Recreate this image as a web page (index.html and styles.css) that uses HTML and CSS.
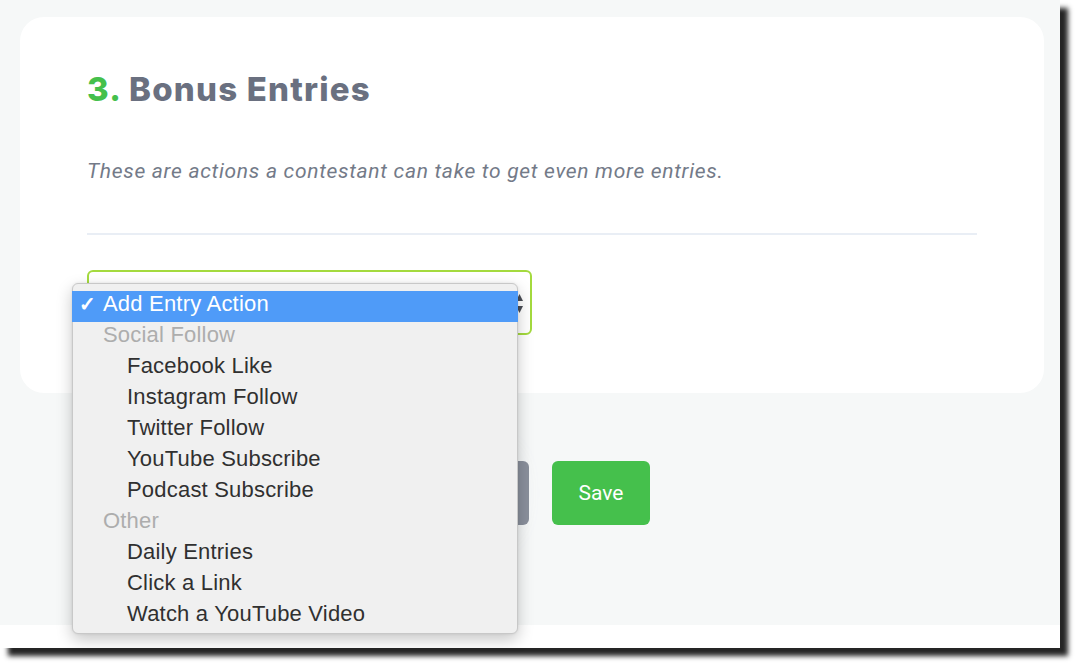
FILE: index.html
```html
<!DOCTYPE html>
<html lang="en">
<head>
<meta charset="utf-8">
<title>Bonus Entries</title>
<link rel="stylesheet" href="styles.css">
</head>
<body>
<div class="frame">
  <div class="page">
    <section class="card">
      <h2 class="title"><span class="num">3.</span> Bonus Entries</h2>
      <p class="lead">These are actions a contestant can take to get even more entries.</p>
      <hr class="rule">
      <div class="select">
        <svg class="arrows" width="7" height="19" viewBox="0 0 7 19" aria-hidden="true">
          <path d="M3.5 0 L7 7 L0 7 Z" fill="#4a4d55"/>
          <path d="M0 12 L7 12 L3.5 19 Z" fill="#4a4d55"/>
        </svg>
      </div>
    </section>
    <div class="actions">
      <button class="btn btn-back">Back</button>
      <button class="btn btn-save">Save</button>
    </div>
  </div>
  <div class="footer"></div>

  <ul class="menu">
    <li class="opt selected"><span class="check">✓</span>Add Entry Action</li>
    <li class="group">Social Follow</li>
    <li class="opt">Facebook Like</li>
    <li class="opt">Instagram Follow</li>
    <li class="opt">Twitter Follow</li>
    <li class="opt">YouTube Subscribe</li>
    <li class="opt">Podcast Subscribe</li>
    <li class="group">Other</li>
    <li class="opt">Daily Entries</li>
    <li class="opt">Click a Link</li>
    <li class="opt">Watch a YouTube Video</li>
  </ul>
</div>
</body>
</html>
```

FILE: styles.css
```css
html, body {
  margin: 0;
  padding: 0;
  background: #ffffff;
}

body {
  height: 667px;
  overflow: hidden;
}

.frame {
  position: relative;
  width: 1060px;
  height: 648px;
  display: flex;
  flex-direction: column;
  background: #ffffff;
  box-shadow: 8px 8px 5px rgba(30, 30, 30, 0.97);
}

.page {
  height: 625px;
  background: #f6f8f8;
  padding-top: 17px;
  box-sizing: border-box;
}

.footer {
  flex: 1;
  background: #ffffff;
}

.card {
  margin-left: 20px;
  width: 1024px;
  height: 376px;
  box-sizing: border-box;
  background: #ffffff;
  border-radius: 24px;
  padding: 52px 67px 0 67px;
}

.title {
  margin: 0;
  font-family: "Inter", "DejaVu Sans", sans-serif;
  font-weight: 800;
  font-size: 33px;
  line-height: 40px;
  color: #6a7080;
  letter-spacing: 1.2px;
}

.num {
  color: #45c04c;
}

.lead {
  margin: 50px 0 0 0;
  font-family: "Roboto", "Liberation Sans", sans-serif;
  font-style: italic;
  font-size: 21px;
  line-height: 24px;
  color: #737a88;
  letter-spacing: 0.7px;
}

.rule {
  margin: 50px 0 0 0;
  border: 0;
  height: 2px;
  background: #e9eef5;
}

.select {
  margin-top: 35px;
  width: 445px;
  height: 65px;
  box-sizing: border-box;
  border: 2px solid #a4da3e;
  border-radius: 6px;
  display: flex;
  justify-content: flex-end;
  align-items: center;
  padding: 2px 7px 0 0;
}

.arrows {
  display: block;
}

.actions {
  margin-top: 68px;
  margin-left: 20px;
  width: 1024px;
  display: flex;
  justify-content: center;
  gap: 23px;
}

.btn {
  height: 64px;
  border: 0;
  border-radius: 6px;
  font-family: "Roboto", "Liberation Sans", sans-serif;
  font-weight: 400;
  font-size: 21px;
  color: #ffffff;
  padding: 0;
}

.btn-back {
  width: 115px;
  background: #8a909c;
  box-shadow: -30px 0 40px rgba(215, 225, 240, 0.45);
}

.btn-save {
  width: 98px;
  background: #45c04c;
}

.menu {
  position: absolute;
  left: 72px;
  top: 283px;
  width: 446px;
  height: 351px;
  box-sizing: border-box;
  margin: 0;
  padding: 7px 0 3px 0;
  list-style: none;
  background: #f0f0f0;
  border: 1px solid #c8c8c8;
  border-radius: 6px;
  box-shadow: 0 6px 16px rgba(0, 0, 0, 0.22), 0 0 3px rgba(0, 0, 0, 0.08);
  font-family: "Liberation Sans", "Helvetica", Arial, sans-serif;
  font-size: 22px;
  letter-spacing: 0.2px;
}

.menu li {
  height: 31px;
  line-height: 25px;
  box-sizing: border-box;
  white-space: nowrap;
}

.opt {
  padding-left: 54px;
  color: #303030;
}

.group {
  padding-left: 30px;
  color: #adadad;
}

.opt.selected {
  padding-left: 7px;
  background: #4f9bf8;
  color: #ffffff;
  margin: 0 -1px;
}

.check {
  display: inline-block;
  width: 24px;
  font-size: 20px;
  font-weight: 700;
}
```
